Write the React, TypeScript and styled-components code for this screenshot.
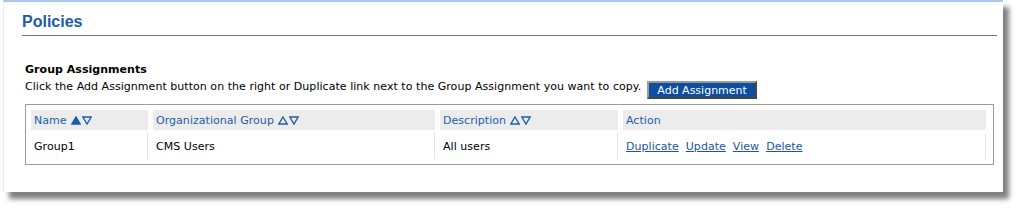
import React from "react";
import styled, { createGlobalStyle } from "styled-components";

const GlobalStyle = createGlobalStyle`
  body {
    margin: 0;
    background: #ffffff;
    font-family: "DejaVu Sans", Verdana, sans-serif;
    font-size: 11px;
    letter-spacing: 0.04px;
    color: #000;
  }
  #root {
    padding-bottom: 16px;
  }
`;

const Panel = styled.div`
  box-sizing: border-box;
  width: 1000px;
  height: 192px;
  margin-left: 3px;
  padding: 10px 6px 0 18px;
  background: #fff;
  border-top: 2px solid #a9c6ec;
  border-left: 1px solid #ececec;
  box-shadow: 6px 7px 5px rgba(0, 0, 0, 0.5);
`;

const Title = styled.h1`
  margin: 0;
  font-family: "Liberation Sans", Arial, sans-serif;
  font-size: 16px;
  line-height: 20px;
  font-weight: bold;
  letter-spacing: 0;
  color: #1b5ba7;
`;

const Rule = styled.hr`
  margin: 3px 0 0;
  border: 0;
  height: 1px;
  background: #767676;
`;

const Section = styled.section`
  margin: 27px 3px 0;
`;

const SectionTitle = styled.h2`
  margin: 0;
  font-size: 11px;
  line-height: 14px;
  font-weight: bold;
`;

const IntroRow = styled.div`
  display: flex;
  align-items: flex-start;
  margin-top: 3px;
  line-height: 14px;
`;

const AddButton = styled.button`
  margin: 1px 0 0 6px;
  padding: 1px 8px 0;
  height: 18px;
  box-sizing: border-box;
  border: 2px outset #9a9a9a;
  background: #0d4e9f;
  color: #fff;
  font-family: "DejaVu Sans", Verdana, sans-serif;
  font-size: 11px;
  line-height: 13px;
`;

const Grid = styled.div`
  display: grid;
  grid-template-columns: 117px 282px 178px 363px;
  column-gap: 5px;
  row-gap: 3px;
  margin-top: 5px;
  padding: 5px 6px 5px 5px;
  border: 1px solid #9c9c9c;
`;

const HeadCell = styled.div`
  display: flex;
  align-items: center;
  height: 20px;
  padding-left: 3px;
  background: #ececec;
  color: #1d5dab;
`;

const Arrows = styled.span`
  display: inline-flex;
  gap: 1px;
  margin-left: 4px;
`;

const Cell = styled.div`
  display: flex;
  align-items: center;
  height: 26px;
  padding-left: 3px;
  border-right: 1px solid #e2e2e2;
`;

const Links = styled(Cell)`
  gap: 7px;
`;

const ActionLink = styled.a`
  color: #1a56a3;
  text-decoration: underline;
  cursor: pointer;
`;

const Triangle = ({ up, filled }: { up: boolean; filled: boolean }) => (
  <svg width="10" height="9" viewBox="0 0 10 9">
    <polygon
      points={up ? "5,1 9.2,8 0.8,8" : "0.8,1 9.2,1 5,8"}
      fill={filled ? "#1d5dab" : "none"}
      stroke="#1d5dab"
      strokeWidth="1.4"
      strokeLinejoin="miter"
    />
  </svg>
);

const columns = [
  { label: "Name", sorted: true },
  { label: "Organizational Group", sorted: false },
  { label: "Description", sorted: false },
];

const App = () => {
  return (
    <>
      <GlobalStyle />
      <Panel>
        <Title>Policies</Title>
        <Rule />
        <Section>
          <SectionTitle>Group Assignments</SectionTitle>
          <IntroRow>
            <span>
              Click the Add Assignment button on the right or Duplicate link next to the Group
              Assignment you want to copy.
            </span>
            <AddButton>Add Assignment</AddButton>
          </IntroRow>
          <Grid>
            {columns.map((c) => (
              <HeadCell key={c.label}>
                {c.label}
                <Arrows>
                  <Triangle up filled={c.sorted} />
                  <Triangle up={false} filled={false} />
                </Arrows>
              </HeadCell>
            ))}
            <HeadCell>Action</HeadCell>
            <Cell>Group1</Cell>
            <Cell>CMS Users</Cell>
            <Cell>All users</Cell>
            <Links>
              <ActionLink>Duplicate</ActionLink>
              <ActionLink>Update</ActionLink>
              <ActionLink>View</ActionLink>
              <ActionLink>Delete</ActionLink>
            </Links>
          </Grid>
        </Section>
      </Panel>
    </>
  );
};

export default App;
